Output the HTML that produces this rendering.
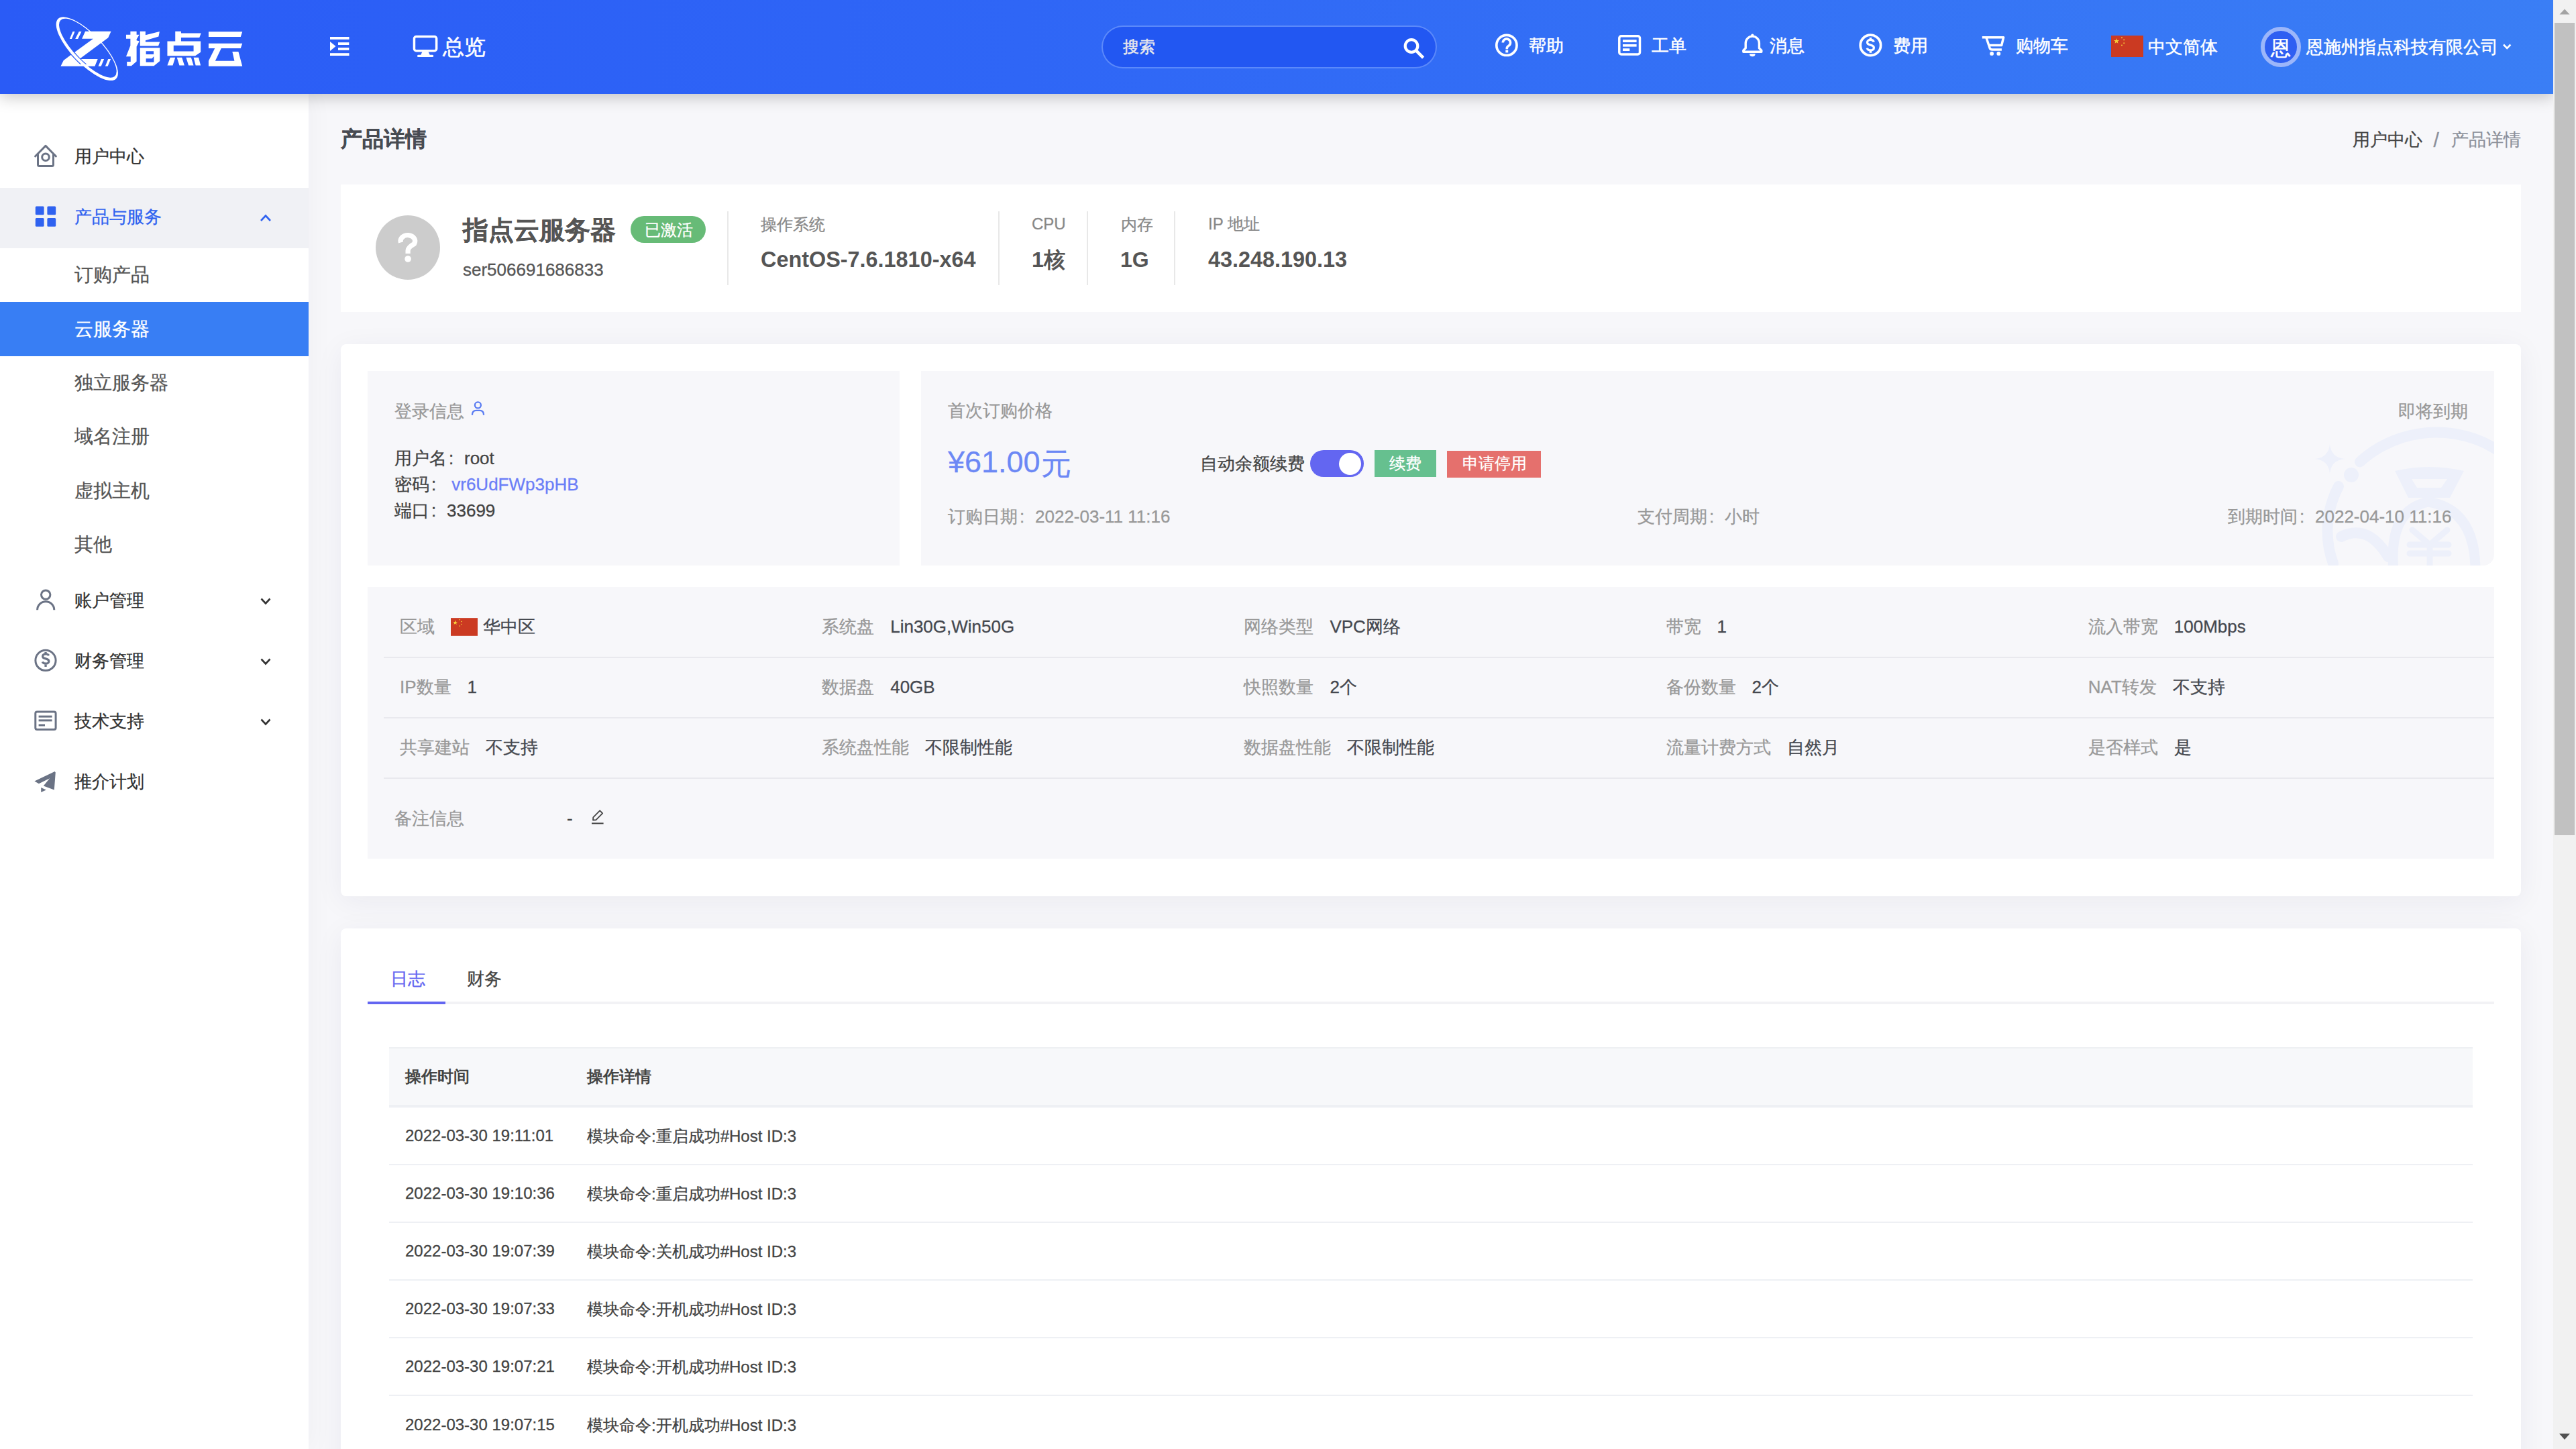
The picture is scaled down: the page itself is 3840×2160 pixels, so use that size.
<!DOCTYPE html>
<html><head><meta charset="utf-8">
<style>
*{box-sizing:border-box;margin:0;padding:0}
html,body{width:3840px;height:2160px;overflow:hidden}
body{position:relative;background:#F7F7FA;font-family:"Liberation Sans",sans-serif;color:#444}
.abs{position:absolute}
.t[style*="font-weight:bold"]{-webkit-text-stroke:0}
.t.bc{-webkit-text-stroke:0.3px currentColor}
#header .t{-webkit-text-stroke:0.5px currentColor}
.t{position:absolute;white-space:nowrap;line-height:1;-webkit-text-stroke:0.3px currentColor}
#header{position:absolute;left:0;top:0;width:3806px;height:140px;background:linear-gradient(90deg,#2A5BF6 0%,#2F66F6 40%,#3A7EF5 100%);z-index:5;box-shadow:0 5px 22px rgba(0,0,0,0.22)}
#sidebar{position:absolute;left:0;top:140px;width:460px;height:2020px;background:#fff;z-index:1;box-shadow:4px 0 36px rgba(20,20,60,0.035)}
#scroll{position:absolute;left:3806px;top:0;width:34px;height:2160px;background:#F1F1F1;z-index:6}
.card{position:absolute;background:#fff}
.box{position:absolute;background:#F7F7FA}
.lbl{color:#999}
.val{color:#444}
</style></head>
<body>
<div id="header">
  <svg class="abs" style="left:60px;top:10px" width="320" height="120" viewBox="0 0 2576 966">
    
    <g fill="#fff">
      <polygon points="540,295 850,295 815,372 470,628 690,628 655,715 245,715 280,645 350,592 635,385 500,385"/>
      <polygon points="390,298 415,298 378,387 353,387"/>
      <polygon points="465,298 495,298 452,387 420,387"/>
      <polygon points="733,628 766,628 730,715 697,715"/>
      <polygon points="815,628 846,628 810,715 780,715"/>
    </g>
    <defs><clipPath id="gapclip"><polygon points="350,500 600,500 600,690 350,690"/></clipPath></defs>
    <g clip-path="url(#gapclip)">
      <path transform="rotate(46 562 505)" fill="#2B5DF6" fill-rule="evenodd" d="M52,505 a510,192 0 1,0 1020,0 a510,192 0 1,0 -1020,0 Z M104,493 a458,150 0 1,0 916,0 a458,150 0 1,0 -916,0 Z"/>
    </g>
    <path transform="rotate(46 562 505)" fill="#fff" fill-rule="evenodd" d="M62,505 a500,182 0 1,0 1000,0 a500,182 0 1,0 -1000,0 Z M94,493 a468,160 0 1,0 936,0 a468,160 0 1,0 -936,0 Z"/>
    <g fill="#fff" fill-rule="evenodd">
      <path d="M1081.8,295 L1156,295 L1156,336.5 L1188.6,336.5 L1156,390 L1156,404.8 L1188.6,413.7 L1156,479 L1156,657 L1093.6,710.5 L1040.2,710.5 L1040.2,660 L1084.7,660 L1084.7,597.7 L1030.1,597.7 L1081.8,467.1 L1081.8,384 L1030.1,384 L1030.1,336.5 L1081.8,336.5 Z"/>
      <path d="M1197.5,295 L1262.9,295 L1262.9,339.5 L1432,297.9 L1420.2,357.3 L1262.9,404.8 L1262.9,422.6 L1435,422.6 L1417.2,470 L1197.5,470 Z"/>
      <path d="M1197.5,493.8 L1435,493.8 L1435,651.2 L1363.8,710.5 L1197.5,710.5 Z M1268.8,532.4 L1360.8,532.4 L1360.8,571 L1268.8,571 Z M1268.8,621.5 L1340,621.5 L1363.8,594.8 L1363.8,666 L1268.8,666 Z"/>
      <path d="M1620,295 L1690,295 L1690,318 L1930,318 L1910,370 L1690,370 L1690,415 L1925,415 L1925,545 L1860,590 L1525,590 L1525,415 L1620,415 Z M1600,465 L1840,465 L1840,535 L1600,535 Z"/>
      <path d="M1560,610 L1620,610 L1590,705 L1525,705 Z M1640,610 L1700,610 L1730,705 L1670,705 Z M1750,610 L1810,610 L1840,705 L1780,705 Z M1840,610 L1900,610 L1925,705 L1865,705 Z"/>
      <path d="M2020,300 L2425,300 L2405,362 L2020,362 Z M2020,440 L2425,440 L2405,500 L2020,500 Z M2095,500 L2172,500 L2100,650 L2330,650 L2305,540 L2378,540 L2425,715 L2020,715 L2020,650 Z"/>
    </g>
  </svg>
  <svg class="abs" style="left:490px;top:53px" width="34" height="34" viewBox="490 53 34 34">
    <g fill="#fff"><rect x="492" y="55" width="28.5" height="3.8"/><rect x="504" y="63.2" width="16.3" height="3.8"/><rect x="504" y="71" width="16.3" height="3.8"/><rect x="492" y="79.2" width="28.5" height="3.8"/><polygon points="492,62 500.5,69 492,76"/></g>
  </svg>
  <svg class="abs" style="left:612px;top:50px" width="44" height="38" viewBox="612 50 44 38">
    <rect x="617.45" y="54.55" width="33.2" height="21.2" rx="3" fill="none" stroke="#fff" stroke-width="3.5"/>
    <polygon points="629.5,77 638.5,77 641,82.5 627,82.5" fill="#fff"/>
    <rect x="622" y="81.8" width="24.2" height="3.2" rx="1.5" fill="#fff"/>
  </svg>
  <div class="t" style="left:660px;top:54px;font-size:32px;color:#fff">总览</div>

  <div class="abs" style="left:1642px;top:38px;width:500px;height:64px;border-radius:32px;background:#2257F2;border:2px solid rgba(130,170,255,0.6)"></div>
  <div class="t" style="left:1673.5px;top:58px;font-size:24px;color:#E8E8EC">搜索</div>
  <svg class="abs" style="left:2088px;top:52px" width="40" height="40" viewBox="2088 52 40 40">
    <circle cx="2104" cy="68.5" r="9.3" fill="none" stroke="#fff" stroke-width="4.2"/>
    <line x1="2111" y1="75.5" x2="2120" y2="84.5" stroke="#fff" stroke-width="4.6" stroke-linecap="square"/>
  </svg>

  <svg class="abs" style="left:2226px;top:48px" width="40" height="40" viewBox="2226 48 40 40">
    <circle cx="2245.9" cy="67.4" r="15.1" fill="none" stroke="#fff" stroke-width="3.7"/>
    <path d="M2240.3,63.6 a5.6,5.6 0 1,1 8.6,4.7 c-1.6,1 -2.6,2 -2.6,3.8 v1.2" fill="none" stroke="#fff" stroke-width="3.6"/>
    <rect x="2244.3" y="74.6" width="3.9" height="3.8" fill="#fff"/>
  </svg>
  <div class="t" style="left:2279px;top:55px;font-size:26px;color:#fff">帮助</div>

  <svg class="abs" style="left:2410px;top:50px" width="40" height="36" viewBox="2410 50 40 36">
    <rect x="2413.8" y="53.8" width="30.7" height="27.2" rx="3" fill="none" stroke="#fff" stroke-width="3.5"/>
    <rect x="2419" y="59.2" width="20.6" height="3.8" fill="#fff"/>
    <rect x="2419" y="66" width="20.6" height="3.6" fill="#fff"/>
    <rect x="2419" y="72.2" width="10.3" height="3.8" fill="#fff"/>
  </svg>
  <div class="t" style="left:2462px;top:55px;font-size:26px;color:#fff">工单</div>

  <svg class="abs" style="left:2594px;top:48px" width="36" height="40" viewBox="2594 48 36 40">
    <path d="M2602.2,71.8 V64.2 a10.1,10.1 0 0,1 20.2,0 V71.8 l3.4,3.4 v2.1 h-27 v-2.1 z" fill="none" stroke="#fff" stroke-width="3.4" stroke-linejoin="round"/>
    <circle cx="2612.3" cy="52.6" r="2.1" fill="#fff"/>
    <path d="M2608,80.3 h8.6 a4.3,3.9 0 0,1 -8.6,0 z" fill="#fff"/>
  </svg>
  <div class="t" style="left:2638px;top:55px;font-size:26px;color:#fff">消息</div>

  <svg class="abs" style="left:2768px;top:48px" width="40" height="40" viewBox="2768 48 40 40">
    <circle cx="2788.4" cy="67.4" r="15.2" fill="none" stroke="#fff" stroke-width="3.7"/>
    <path d="M2793.3,62.6 c-0.6,-2 -2.4,-3.2 -4.9,-3.2 c-3,0 -4.9,1.6 -4.9,3.8 c0,2.4 2,3.2 4.9,3.9 c3,0.7 5,1.6 5,4.1 c0,2.3 -2.1,3.8 -5,3.8 c-2.7,0 -4.6,-1.3 -5.2,-3.4" fill="none" stroke="#fff" stroke-width="3.3"/>
    <rect x="2786.7" y="56" width="3.4" height="3.6" fill="#fff"/>
    <rect x="2786.7" y="75.2" width="3.4" height="3.6" fill="#fff"/>
  </svg>
  <div class="t" style="left:2822px;top:55px;font-size:26px;color:#fff">费用</div>

  <svg class="abs" style="left:2950px;top:50px" width="42" height="36" viewBox="2950 50 42 36">
    <path d="M2954.8,55.8 H2986.6 L2983.7,67.5 H2964.5 M2960.8,55.8 L2966,71.3 Q2967,74 2970,74 H2983.9" fill="none" stroke="#fff" stroke-width="3.5" stroke-linejoin="round"/>
    <circle cx="2969.1" cy="79.9" r="2.9" fill="#fff"/>
    <circle cx="2979.3" cy="79.9" r="2.9" fill="#fff"/>
  </svg>
  <div class="t" style="left:3005px;top:55px;font-size:26px;color:#fff">购物车</div>

  <svg class="abs" style="left:3147px;top:53px" width="48" height="32" viewBox="0 0 30 20">
    <rect width="30" height="20" fill="#CB3A22"/>
    <polygon fill="#F7D13A" points="5.00,2.50 5.62,4.35 7.57,4.37 6.00,5.52 6.59,7.38 5.00,6.25 3.41,7.38 4.00,5.52 2.43,4.37 4.38,4.35"/>
    <circle cx="10" cy="2" r="0.6" fill="#F7D13A"/><circle cx="12" cy="4" r="0.6" fill="#F7D13A"/><circle cx="12" cy="7" r="0.6" fill="#F7D13A"/><circle cx="10" cy="9" r="0.6" fill="#F7D13A"/>
  </svg>
  <div class="t" style="left:3202px;top:57px;font-size:26px;color:#fff">中文简体</div>

  <div class="abs" style="left:3370px;top:40px;width:60px;height:60px;border-radius:50%;background:#2F5FF2;border:6.5px solid #9CB6FA"></div>
  <div class="t" style="left:3385px;top:56.5px;font-size:30px;color:#fff">恩</div>
  <div class="t" style="left:3438px;top:57px;font-size:26px;color:#fff">恩施州指点科技有限公司</div>
  <svg class="abs" style="left:3726px;top:60px" width="22" height="20" viewBox="3726 60 22 20">
    <polyline points="3732,66.5 3737.2,71.8 3742.4,66.5" fill="none" stroke="#fff" stroke-width="2.6"/>
  </svg>
</div>
<div id="sidebar">
  <svg class="abs" style="left:0;top:0" width="460" height="1100" viewBox="0 140 460 1100">
    <g fill="none" stroke="#6B7385" stroke-width="3" stroke-linecap="round" stroke-linejoin="round">
      <path d="M52.6,233 L68,217.4 L83.4,233"/>
      <path d="M56.5,230.5 V245.6 a2,2 0 0,0 2,2 H77.5 a2,2 0 0,0 2,-2 V230.5" />
      <circle cx="68" cy="234.2" r="5.3"/>
    </g>
  </svg>
  <div class="t" style="left:111px;top:80px;font-size:26px;color:#333">用户中心</div>
  <div class="abs" style="left:0;top:140px;width:460px;height:90px;background:#F0F1F5"></div>
  <svg class="abs" style="left:0;top:0" width="460" height="1100" viewBox="0 140 460 1100">
    <g fill="#2F62F0">
      <rect x="52.8" y="307.5" width="12.8" height="12.8" rx="1.5"/><rect x="70.4" y="307.5" width="12.8" height="12.8" rx="1.5"/>
      <rect x="52.8" y="324.9" width="12.8" height="12.8" rx="1.5"/><rect x="70.4" y="324.9" width="12.8" height="12.8" rx="1.5"/>
    </g>
    <polyline points="389,329 396,321.5 403,329" fill="none" stroke="#2F62F0" stroke-width="2.6"/>
    <g fill="none" stroke="#333" stroke-width="2.6">
      <polyline points="389.5,892.5 396,899.5 402.5,892.5"/>
      <polyline points="389.5,982.5 396,989.5 402.5,982.5"/>
      <polyline points="389.5,1072.5 396,1079.5 402.5,1072.5"/>
    </g>
    <g fill="none" stroke="#6B7385" stroke-width="3">
      <circle cx="68.2" cy="886.6" r="6.7"/>
      <path d="M55.6,909.3 a12.6,12.6 0 0,1 25.2,0"/>
      <circle cx="68" cy="984.4" r="15.1"/>
      <rect x="52.8" y="1061" width="30.3" height="26.4" rx="2.5"/>
    </g>
    <path d="M72.8,977.3 c-0.7,-1.4 -2.3,-2.3 -4.6,-2.3 c-2.8,0 -4.6,1.4 -4.6,3.4 c0,2.2 1.9,2.9 4.6,3.5 c2.8,0.7 4.7,1.5 4.7,3.8 c0,2.1 -2,3.5 -4.7,3.5 c-2.5,0 -4.3,-1 -4.9,-2.7" fill="none" stroke="#6B7385" stroke-width="3.2"/>
    <rect x="66.4" y="972" width="3.3" height="3.4" fill="#6B7385"/>
    <rect x="66.4" y="990.6" width="3.3" height="3.4" fill="#6B7385"/>
    <g fill="#6B7385">
      <rect x="57.6" y="1066.6" width="20" height="3"/>
      <rect x="57.6" y="1072.4" width="20" height="3"/>
      <rect x="57.6" y="1079.5" width="9.4" height="3"/>
      <polygon points="51.4,1164.6 81.7,1149.9 82.8,1151.5 80.8,1177.6 64.8,1171.5 74.1,1160.2 57.9,1168.3"/>
      <polygon points="61.2,1174.1 68.9,1177.5 61.2,1181.1"/>
    </g>
  </svg>
  <div class="t" style="left:111px;top:170px;font-size:26px;color:#2F62F0">产品与服务</div>
  <div class="t" style="left:111px;top:256px;font-size:28px;color:#555">订购产品</div>
  <div class="abs" style="left:0;top:310px;width:460px;height:81px;background:#387EF4"></div>
  <div class="t" style="left:111px;top:337px;font-size:28px;color:#fff">云服务器</div>
  <div class="t" style="left:111px;top:417px;font-size:28px;color:#555">独立服务器</div>
  <div class="t" style="left:111px;top:497px;font-size:28px;color:#555">域名注册</div>
  <div class="t" style="left:111px;top:578px;font-size:28px;color:#555">虚拟主机</div>
  <div class="t" style="left:111px;top:658px;font-size:28px;color:#555">其他</div>
  <div class="t" style="left:111px;top:742px;font-size:26px;color:#333">账户管理</div>
  <div class="t" style="left:111px;top:832px;font-size:26px;color:#333">财务管理</div>
  <div class="t" style="left:111px;top:922px;font-size:26px;color:#333">技术支持</div>
  <div class="t" style="left:111px;top:1011.5px;font-size:26px;color:#333">推介计划</div>
</div>
<div id="main">
  <div class="t bc" style="left:508px;top:191px;font-size:32px;font-weight:bold;color:#484B52">产品详情</div>
  <div class="t" style="left:3507px;top:194.5px;font-size:26px;color:#444">用户中心</div>
  <div class="t" style="left:3627.5px;top:194px;font-size:30px;color:#8C909A">/</div>
  <div class="t" style="left:3654px;top:194.5px;font-size:26px;color:#8C909A">产品详情</div>

  <div class="card" style="left:508px;top:275px;width:3250px;height:190px"></div>
  <div class="abs" style="left:560px;top:321px;width:96px;height:96px;border-radius:50%;background:#CCCCCC"></div>
  <svg class="abs" style="left:580px;top:340px" width="60" height="60" viewBox="580 340 60 60">
    <path d="M597.3,361.5 A10.85,8.9 0 1,1 617.5,363.5 Q608.3,368.5 608.1,373.5 V378" fill="none" stroke="#fff" stroke-width="7.2"/>
    <circle cx="608.1" cy="386" r="4.8" fill="#fff"/>
  </svg>
  <div class="t bc" style="left:690px;top:324px;font-size:38px;font-weight:bold;color:#555">指点云服务器</div>
  <div class="abs" style="left:940px;top:322px;width:112px;height:40px;border-radius:20px;background:#67BB77"></div>
  <div class="t" style="left:961px;top:331px;font-size:24px;color:#fff">已激活</div>
  <div class="t" style="left:690px;top:389px;font-size:26px;color:#555">ser506691686833</div>
  <div class="abs" style="left:1084px;top:315px;width:2px;height:110px;background:#E8E8E8"></div>
  <div class="t" style="left:1134px;top:323px;font-size:24px;color:#888">操作系统</div>
  <div class="t" style="left:1134px;top:371px;font-size:32.4px;font-weight:bold;color:#555">CentOS-7.6.1810-x64</div>
  <div class="abs" style="left:1488px;top:315px;width:2px;height:110px;background:#E8E8E8"></div>
  <div class="t" style="left:1538px;top:322px;font-size:24px;color:#888">CPU</div>
  <div class="t" style="left:1538px;top:371px;font-size:32px;font-weight:bold;color:#555">1核</div>
  <div class="abs" style="left:1620px;top:315px;width:2px;height:110px;background:#E8E8E8"></div>
  <div class="t" style="left:1671px;top:323px;font-size:24px;color:#888">内存</div>
  <div class="t" style="left:1670px;top:371px;font-size:32px;font-weight:bold;color:#555">1G</div>
  <div class="abs" style="left:1750px;top:315px;width:2px;height:110px;background:#E8E8E8"></div>
  <div class="t" style="left:1801px;top:322px;font-size:24px;color:#888">IP 地址</div>
  <div class="t" style="left:1801px;top:371px;font-size:32.4px;font-weight:bold;color:#555">43.248.190.13</div>

  <div class="card" style="left:508px;top:513px;width:3250px;height:823px;border-radius:8px;box-shadow:0 8px 44px rgba(40,40,90,0.06)"></div>
  <div class="box" style="left:548px;top:553px;width:793px;height:290px"></div>
  <div class="t" style="left:588px;top:600px;font-size:26px;color:#999">登录信息</div>
  <svg class="abs" style="left:700px;top:597px" width="26" height="26" viewBox="700 597 26 26">
    <circle cx="712.4" cy="603.9" r="4.5" fill="none" stroke="#5A7CF2" stroke-width="2.3"/>
    <path d="M703.9,618.7 Q703.9,611.9 710,611.9 H715 Q721.1,611.9 721.1,618.7" fill="none" stroke="#5A7CF2" stroke-width="2.3"/>
  </svg>
  <div class="t" style="left:588px;top:670px;font-size:26px;color:#444">用户名<span style="display:inline-block;width:26px;padding-left:3px">:</span>root</div>
  <div class="t" style="left:588px;top:709px;font-size:26px;color:#444">密码<span style="display:inline-block;width:26px;padding-left:3px">:</span> <span style="color:#6B7EF7">vr6UdFWp3pHB</span></div>
  <div class="t" style="left:588px;top:748px;font-size:26px;color:#444">端口<span style="display:inline-block;width:26px;padding-left:3px">:</span>33699</div>

  <div class="box" style="left:1373px;top:553px;width:2345px;height:290px;overflow:hidden;border-radius:0 0 16px 0">
    <svg class="abs" style="left:0;top:0" width="2345" height="290" viewBox="1373 553 2345 290">
      <g fill="none" stroke="#EDF0FA" stroke-width="16" stroke-linecap="round">
        <path d="M3518,688.4 A170,170 0 0,1 3780,730.9"/>
        <path d="M3486,725 A143,143 0 0,0 3478,840"/>
        <path d="M3490,800 Q3530,780 3560,830"/>
      </g>
      <g fill="#EDF0FA">
        <circle cx="3505" cy="708" r="11"/>
        <path d="M3570,702 Q3621,690 3673,702 L3652,742 L3590,742 Z M3595,714 L3648,714 L3639,727 L3603,727 Z" fill-rule="evenodd"/>
        <path d="M3473,662 Q3475,682 3495,684 Q3475,686 3473,706 Q3471,686 3451,684 Q3471,682 3473,662 Z" />
      </g>
      <g fill="none" stroke="#EDF0FA" stroke-width="15">
        <path d="M3568,850 Q3560,760 3620,748 Q3690,760 3690,850"/>
      </g>
      <g fill="none" stroke="#EDF0FA" stroke-width="9" stroke-linecap="round">
        <path d="M3596,790 L3622,812 L3648,790 M3592,812 H3650 M3592,825 H3650 M3622,812 V850"/>
      </g>
    </svg>
  </div>
  <div class="t" style="left:1413px;top:598.5px;font-size:26px;color:#999">首次订购价格</div>
  <div class="t" style="left:3575px;top:600px;font-size:26px;color:#999">即将到期</div>
  <div class="t" style="left:1413px;top:666px;font-size:45px;color:#6C88F5">¥61.00<span style="position:relative;top:3px;margin-left:1px">元</span></div>
  <div class="t" style="left:1789px;top:678px;font-size:26px;color:#444">自动余额续费</div>
  <div class="abs" style="left:1953px;top:671px;width:80px;height:40px;border-radius:20px;background:#6366F1"></div>
  <div class="abs" style="left:1996px;top:675px;width:33px;height:33px;border-radius:50%;background:#fff"></div>
  <div class="abs" style="left:2049px;top:671px;width:92px;height:40px;background:#66C08F"></div>
  <div class="t" style="left:2071px;top:679px;font-size:24px;color:#fff">续费</div>
  <div class="abs" style="left:2157px;top:672px;width:140px;height:40px;background:#E5706D"></div>
  <div class="t" style="left:2180px;top:679px;font-size:24px;color:#fff">申请停用</div>
  <div class="t" style="left:1413px;top:757px;font-size:26px;color:#999">订购日期<span style="display:inline-block;width:26px;padding-left:3px">:</span>2022-03-11 11:16</div>
  <div class="t" style="left:2441px;top:757px;font-size:26px;color:#999">支付周期<span style="display:inline-block;width:26px;padding-left:3px">:</span>小时</div>
  <div class="t" style="left:3321px;top:757px;font-size:26px;color:#999">到期时间<span style="display:inline-block;width:26px;padding-left:3px">:</span>2022-04-10 11:16</div>

  <div class="box" style="left:548px;top:875px;width:3170px;height:405px"></div>
  <div class="abs" style="left:572px;top:979px;width:3146px;height:2px;background:#E9E9EE"></div>
  <div class="abs" style="left:572px;top:1069px;width:3146px;height:2px;background:#E9E9EE"></div>
  <div class="abs" style="left:572px;top:1159px;width:3146px;height:2px;background:#E9E9EE"></div>
    <div class="t" style="left:596.0px;top:921px;font-size:26px;color:#999">区域<span style="color:#45484F;margin-left:24px"><svg style="display:inline-block;vertical-align:top;margin-top:0px;margin-right:8px" width="40" height="27" viewBox="0 0 30 20"><rect width="30" height="20" fill="#CB3A22"/><polygon fill="#F7D13A" points="5.00,2.50 5.62,4.35 7.57,4.37 6.00,5.52 6.59,7.38 5.00,6.25 3.41,7.38 4.00,5.52 2.43,4.37 4.38,4.35"/><circle cx="10" cy="2" r="0.6" fill="#F7D13A"/><circle cx="12" cy="4" r="0.6" fill="#F7D13A"/><circle cx="12" cy="7" r="0.6" fill="#F7D13A"/><circle cx="10" cy="9" r="0.6" fill="#F7D13A"/></svg>华中区</span></div>
  <div class="t" style="left:1225.2px;top:921px;font-size:26px;color:#999">系统盘<span style="color:#45484F;margin-left:24px">Lin30G,Win50G</span></div>
  <div class="t" style="left:1854.4px;top:921px;font-size:26px;color:#999">网络类型<span style="color:#45484F;margin-left:24px">VPC网络</span></div>
  <div class="t" style="left:2483.6px;top:921px;font-size:26px;color:#999">带宽<span style="color:#45484F;margin-left:24px">1</span></div>
  <div class="t" style="left:3112.8px;top:921px;font-size:26px;color:#999">流入带宽<span style="color:#45484F;margin-left:24px">100Mbps</span></div>
  <div class="t" style="left:596.0px;top:1011px;font-size:26px;color:#999">IP数量<span style="color:#45484F;margin-left:24px">1</span></div>
  <div class="t" style="left:1225.2px;top:1011px;font-size:26px;color:#999">数据盘<span style="color:#45484F;margin-left:24px">40GB</span></div>
  <div class="t" style="left:1854.4px;top:1011px;font-size:26px;color:#999">快照数量<span style="color:#45484F;margin-left:24px">2个</span></div>
  <div class="t" style="left:2483.6px;top:1011px;font-size:26px;color:#999">备份数量<span style="color:#45484F;margin-left:24px">2个</span></div>
  <div class="t" style="left:3112.8px;top:1011px;font-size:26px;color:#999">NAT转发<span style="color:#45484F;margin-left:24px">不支持</span></div>
  <div class="t" style="left:596.0px;top:1101px;font-size:26px;color:#999">共享建站<span style="color:#45484F;margin-left:24px">不支持</span></div>
  <div class="t" style="left:1225.2px;top:1101px;font-size:26px;color:#999">系统盘性能<span style="color:#45484F;margin-left:24px">不限制性能</span></div>
  <div class="t" style="left:1854.4px;top:1101px;font-size:26px;color:#999">数据盘性能<span style="color:#45484F;margin-left:24px">不限制性能</span></div>
  <div class="t" style="left:2483.6px;top:1101px;font-size:26px;color:#999">流量计费方式<span style="color:#45484F;margin-left:24px">自然月</span></div>
  <div class="t" style="left:3112.8px;top:1101px;font-size:26px;color:#999">是否样式<span style="color:#45484F;margin-left:24px">是</span></div>

  <div class="t" style="left:588px;top:1206.5px;font-size:26px;color:#999">备注信息</div>
  <div class="t" style="left:845px;top:1207px;font-size:26px;color:#444">-</div>
  <svg class="abs" style="left:878px;top:1204px" width="26" height="28" viewBox="878 1204 26 28">
    <path d="M884,1222.5 L884.3,1218.3 L894.2,1208.4 L898.2,1212.4 L888.3,1222.3 Z" fill="none" stroke="#444" stroke-width="1.8" stroke-linejoin="round"/>
    <line x1="882" y1="1227.4" x2="899.6" y2="1227.4" stroke="#444" stroke-width="2"/>
  </svg>

  <div class="card" style="left:508px;top:1384px;width:3250px;height:900px;border-radius:8px;box-shadow:0 8px 44px rgba(40,40,90,0.06)"></div>
  <div class="t" style="left:582px;top:1445.5px;font-size:26px;color:#6366F1">日志</div>
  <div class="t" style="left:696px;top:1445.5px;font-size:26px;color:#444">财务</div>
  <div class="abs" style="left:548px;top:1493px;width:3170px;height:4px;background:#F2F2F5"></div>
  <div class="abs" style="left:548px;top:1493px;width:116px;height:4px;background:#6366F1"></div>
  <div class="abs" style="left:580px;top:1561px;width:3106px;height:90px;background:#F7F8FA;border-top:2px solid #EEF0F3;border-bottom:4px solid #EEF0F4"></div>
  <div class="t" style="left:604px;top:1592.5px;font-size:24px;font-weight:bold;color:#444">操作时间</div>
  <div class="t" style="left:875px;top:1592.5px;font-size:24px;font-weight:bold;color:#444">操作详情</div>
    <div class="t" style="left:604px;top:1681.0px;font-size:24px;color:#444">2022-03-30 19:11:01</div>
  <div class="t" style="left:875px;top:1682.0px;font-size:24px;color:#444">模块命令:重启成功#Host ID:3</div>
  <div class="abs" style="left:580px;top:1735.0px;width:3106px;height:2px;background:#EEF0F4"></div>
  <div class="t" style="left:604px;top:1767.1px;font-size:24px;color:#444">2022-03-30 19:10:36</div>
  <div class="t" style="left:875px;top:1768.1px;font-size:24px;color:#444">模块命令:重启成功#Host ID:3</div>
  <div class="abs" style="left:580px;top:1821.1px;width:3106px;height:2px;background:#EEF0F4"></div>
  <div class="t" style="left:604px;top:1853.2px;font-size:24px;color:#444">2022-03-30 19:07:39</div>
  <div class="t" style="left:875px;top:1854.2px;font-size:24px;color:#444">模块命令:关机成功#Host ID:3</div>
  <div class="abs" style="left:580px;top:1907.2px;width:3106px;height:2px;background:#EEF0F4"></div>
  <div class="t" style="left:604px;top:1939.3px;font-size:24px;color:#444">2022-03-30 19:07:33</div>
  <div class="t" style="left:875px;top:1940.3px;font-size:24px;color:#444">模块命令:开机成功#Host ID:3</div>
  <div class="abs" style="left:580px;top:1993.3px;width:3106px;height:2px;background:#EEF0F4"></div>
  <div class="t" style="left:604px;top:2025.4px;font-size:24px;color:#444">2022-03-30 19:07:21</div>
  <div class="t" style="left:875px;top:2026.4px;font-size:24px;color:#444">模块命令:开机成功#Host ID:3</div>
  <div class="abs" style="left:580px;top:2079.4px;width:3106px;height:2px;background:#EEF0F4"></div>
  <div class="t" style="left:604px;top:2111.5px;font-size:24px;color:#444">2022-03-30 19:07:15</div>
  <div class="t" style="left:875px;top:2112.5px;font-size:24px;color:#444">模块命令:开机成功#Host ID:3</div>

</div>
<div id="scroll">
  <div class="abs" style="left:2px;top:34px;width:30px;height:1211px;background:#C1C1C1"></div>
  <svg class="abs" style="left:0;top:0" width="34" height="34"><path d="M9.5 21.5 L17 13.5 L24.5 21.5 Z" fill="#A3A3A3"/></svg>
  <svg class="abs" style="left:0;top:2126px" width="34" height="34"><path d="M9 11 L25 11 L17 20 Z" fill="#505050"/></svg>
</div>
</body></html>
